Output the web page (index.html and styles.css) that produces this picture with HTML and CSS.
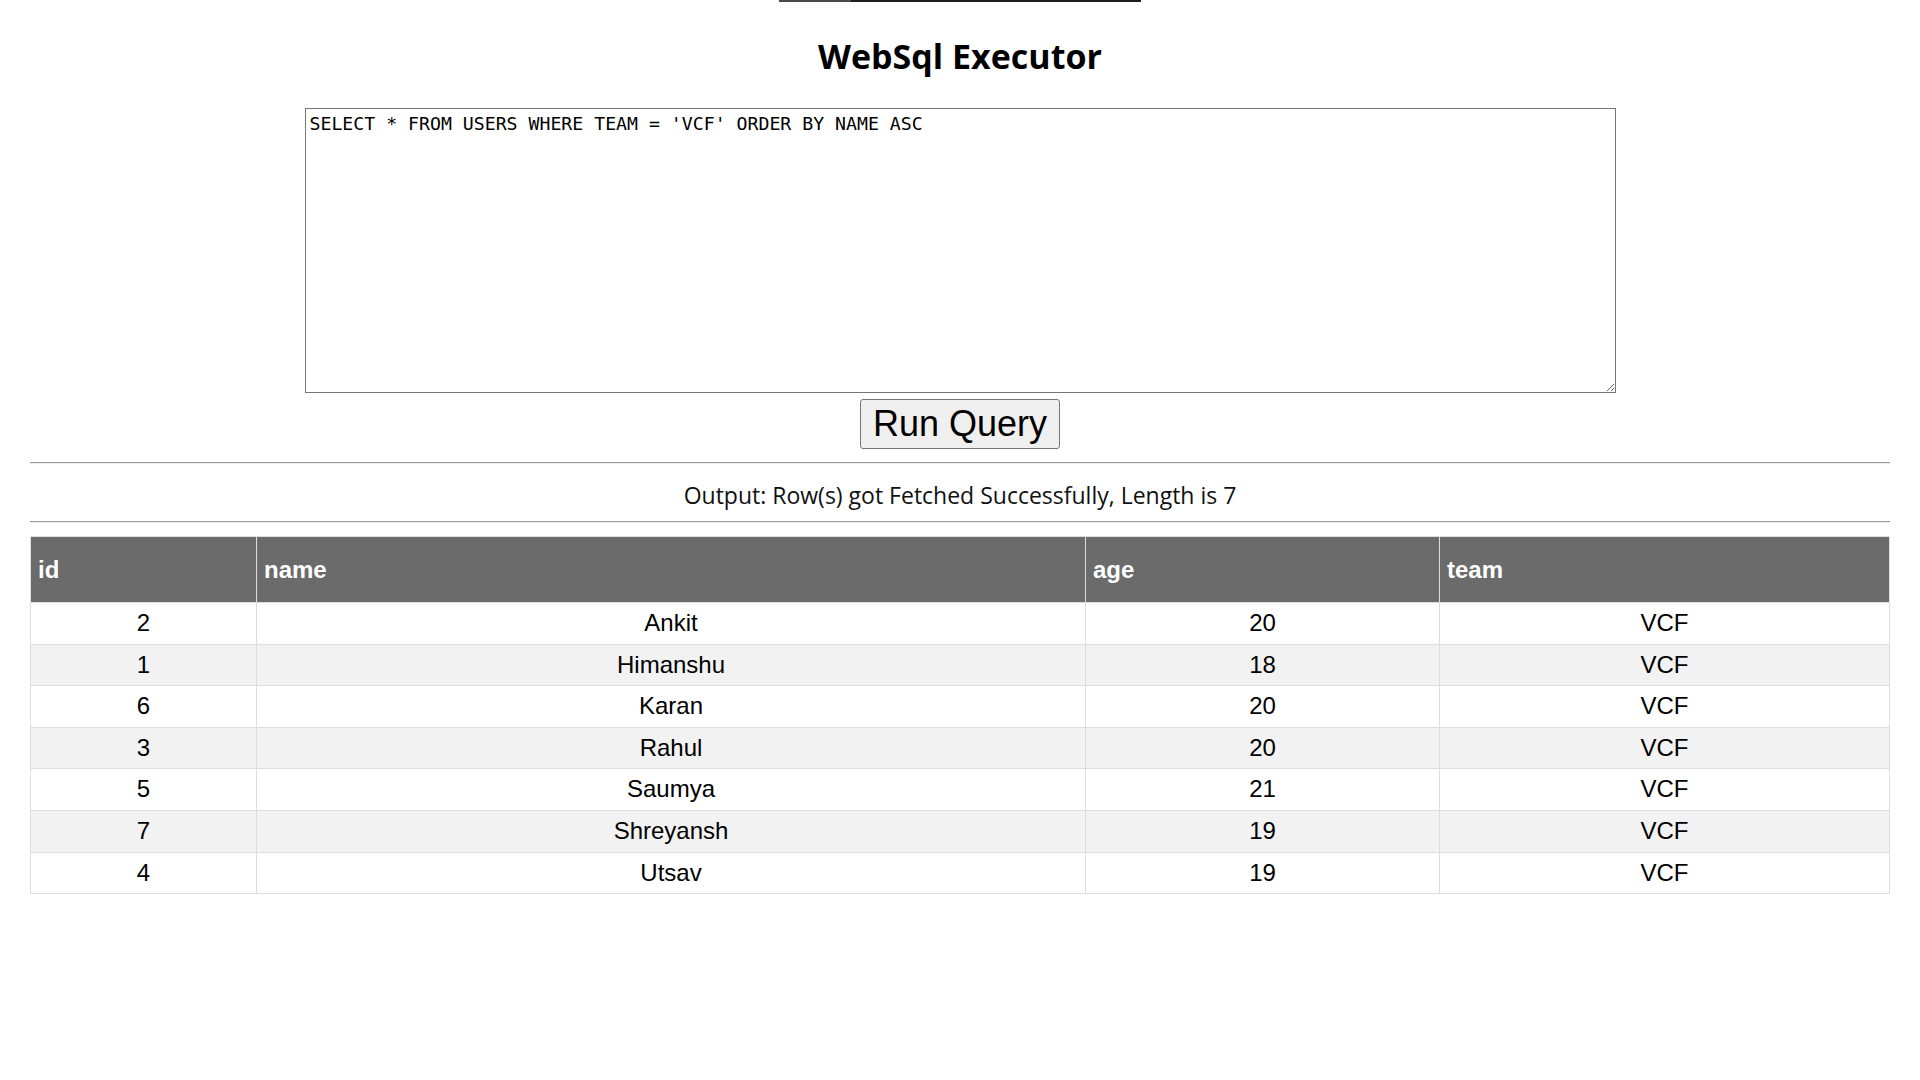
FILE: index.html
```html
<!DOCTYPE html>
<html lang="en">
<head>
<meta charset="utf-8">
<title>WebSql Executor</title>
<link rel="stylesheet" href="styles.css">
</head>
<body>
<div class="topbar"></div>
<main class="page">
  <h1 class="title">WebSql Executor</h1>
  <div class="editor">
    <textarea class="query" spellcheck="false">SELECT * FROM USERS WHERE TEAM = 'VCF' ORDER BY NAME ASC</textarea>
    <button class="run" type="button">Run Query</button>
  </div>
  <hr class="rule">
  <p class="output">Output: Row(s) got Fetched Successfully, Length is 7</p>
  <hr class="rule">
  <table class="results">
    <colgroup>
      <col class="c-id"><col class="c-name"><col class="c-age"><col class="c-team">
    </colgroup>
    <thead>
      <tr><th>id</th><th>name</th><th>age</th><th>team</th></tr>
    </thead>
    <tbody>
      <tr><td>2</td><td>Ankit</td><td>20</td><td>VCF</td></tr>
      <tr><td>1</td><td>Himanshu</td><td>18</td><td>VCF</td></tr>
      <tr><td>6</td><td>Karan</td><td>20</td><td>VCF</td></tr>
      <tr><td>3</td><td>Rahul</td><td>20</td><td>VCF</td></tr>
      <tr><td>5</td><td>Saumya</td><td>21</td><td>VCF</td></tr>
      <tr><td>7</td><td>Shreyansh</td><td>19</td><td>VCF</td></tr>
      <tr><td>4</td><td>Utsav</td><td>19</td><td>VCF</td></tr>
    </tbody>
  </table>
</main>
</body>
</html>
```
FILE: styles.css
```css
html, body {
  margin: 0;
  padding: 0;
  background: #ffffff;
}

body {
  font-family: "Open Sans", "Noto Sans", sans-serif;
  color: #000;
}

.topbar {
  width: 362px;
  height: 2px;
  margin: 0 auto;
  background: linear-gradient(to right, #4a4a4a 0, #4a4a4a 72px, #1e1e1e 72px);
}

.page {
  margin: 0 30px;
}

.title {
  margin: 31px 0 0;
  font-size: 34px;
  line-height: 46px;
  font-weight: 700;
  text-align: center;
}

.editor {
  margin-top: 29px;
  display: flex;
  flex-direction: column;
  align-items: center;
  gap: 6px;
}

.query {
  box-sizing: border-box;
  width: 1311px;
  height: 285px;
  margin: 0;
  padding: 4px 2px 2px 4px;
  border: 1px solid #767676;
  font-family: "DejaVu Sans Mono", "Liberation Mono", monospace;
  font-size: 18.2px;
  color: #000;
  resize: both;
}

.run {
  margin: 0;
  padding: 3px 12px;
  font-family: "Liberation Sans", Arial, sans-serif;
  font-size: 36px;
  line-height: 42px;
  color: #000;
  background: #efefef;
  border: 1px solid #767676;
  border-radius: 3px;
}

.rule {
  margin: 0;
  height: 0;
  border: 0;
  border-top: 1px solid #9a9a9a;
  border-bottom: 1px solid #eeeeee;
}

.editor + .rule {
  margin-top: 13px;
}

.output {
  margin: 0;
  padding: 15.5px 0 10.5px;
  font-size: 23px;
  line-height: 31px;
  text-align: center;
  color: #111;
}

.results {
  margin-top: 13px;
  width: 100%;
  border-collapse: collapse;
  table-layout: fixed;
  font-family: "Liberation Sans", Arial, sans-serif;
  font-size: 24px;
}

.c-id { width: 226px; }
.c-name { width: 829px; }
.c-age { width: 354px; }
.c-team { width: auto; }

.results th,
.results td {
  border: 1px solid #dddddd;
}

.results th {
  padding: 19px 7px;
  line-height: 27px;
  text-align: left;
  font-weight: 700;
  color: #ffffff;
  background: #6b6b6b;
}

.results td {
  padding: 7px 8px;
  line-height: 26.6px;
  text-align: center;
  color: #000;
}

.results tbody tr:nth-child(even) {
  background: #f2f2f2;
}
```
